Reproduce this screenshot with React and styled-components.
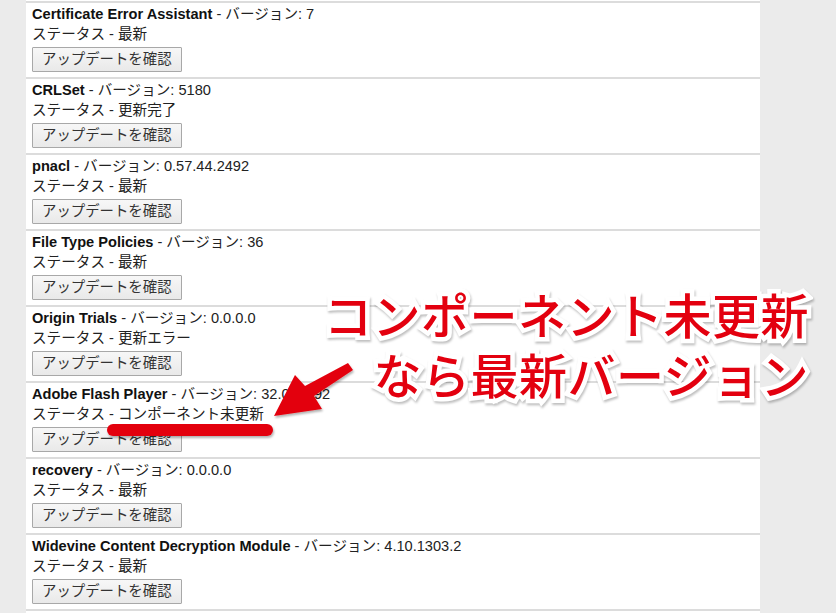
import React from 'react';
import styled, { createGlobalStyle } from 'styled-components';

const GlobalStyle = createGlobalStyle`
  html, body {
    margin: 0;
    padding: 0;
    background: #ebebeb;
  }
  body {
    font-family: "Liberation Sans", "Noto Sans CJK JP", sans-serif;
    overflow: hidden;
  }
`;

const Page = styled.div`
  position: relative;
  width: 836px;
  height: 613px;
  display: flex;
  overflow: hidden;
`;

const Panel = styled.section`
  margin-left: 26px;
  width: 734px;
  padding-top: 1px;
  background: #fff;
  align-self: flex-start;
`;

const Row = styled.div`
  border-top: 2px solid #dcdcdc;
  padding: 1px 6px 5px;
  height: 76px;
  box-sizing: border-box;
  color: #222;
  font-size: 14.6px;
`;

const Line = styled.div`
  line-height: 20px;
  height: 20px;
  white-space: nowrap;
  & > b {
    color: #111;
    font-weight: 700;
  }
`;

const CheckButton = styled.button`
  margin-top: 3px;
  height: 25px;
  padding: 0 9px;
  border: 1px solid #a8a8a8;
  border-radius: 1px;
  background: linear-gradient(#f7f7f7, #e9e9e9);
  color: #333;
  font-family: "Liberation Sans", "Noto Sans CJK JP", sans-serif;
  font-size: 14.4px;
  line-height: 23px;
`;

const Callout = styled.div`
  position: absolute;
  top: 283px;
  right: 27px;
  text-align: right;
  font-family: "Noto Sans CJK JP", sans-serif;
  font-weight: 500;
  font-size: 48px;
  line-height: 60px;
  letter-spacing: 0.5px;
  color: #e3000f;
  -webkit-text-stroke: 9px #fff;
  paint-order: stroke fill;
  filter: drop-shadow(1px 2px 1px rgba(0, 0, 0, 0.25));
  white-space: nowrap;
`;

const Overlay = styled.svg`
  position: absolute;
  left: 0;
  top: 0;
  pointer-events: none;
`;

const components = [
  { name: 'Certificate Error Assistant', version: '7', status: '最新' },
  { name: 'CRLSet', version: '5180', status: '更新完了' },
  { name: 'pnacl', version: '0.57.44.2492', status: '最新' },
  { name: 'File Type Policies', version: '36', status: '最新' },
  { name: 'Origin Trials', version: '0.0.0.0', status: '更新エラー' },
  { name: 'Adobe Flash Player', version: '32.0.0.192', status: 'コンポーネント未更新' },
  { name: 'recovery', version: '0.0.0.0', status: '最新' },
  { name: 'Widevine Content Decryption Module', version: '4.10.1303.2', status: '最新' },
];

export default function App() {
  return (
    <>
      <GlobalStyle />
      <Page>
        <Panel>
          {components.map((c) => (
            <Row key={c.name}>
              <Line>
                <b>{c.name}</b> - バージョン: {c.version}
              </Line>
              <Line>ステータス - {c.status}</Line>
              <CheckButton>アップデートを確認</CheckButton>
            </Row>
          ))}
          <Row />
        </Panel>

        <Overlay width="836" height="613" viewBox="0 0 836 613">
          <defs>
            <filter id="sh" x="-20%" y="-20%" width="140%" height="140%">
              <feDropShadow dx="1" dy="2" stdDeviation="1.2" floodColor="#000" floodOpacity="0.3" />
            </filter>
          </defs>
          <g filter="url(#sh)" fill="#e3000f">
            <polygon points="348,363 353,370 314,396 322,409 274,416 295,375 305,386" />
            <rect x="107" y="424" width="166" height="12" rx="6" />
          </g>
        </Overlay>

        <Callout>
          コンポーネント未更新
          <br />
          なら最新バージョン
        </Callout>
      </Page>
    </>
  );
}
